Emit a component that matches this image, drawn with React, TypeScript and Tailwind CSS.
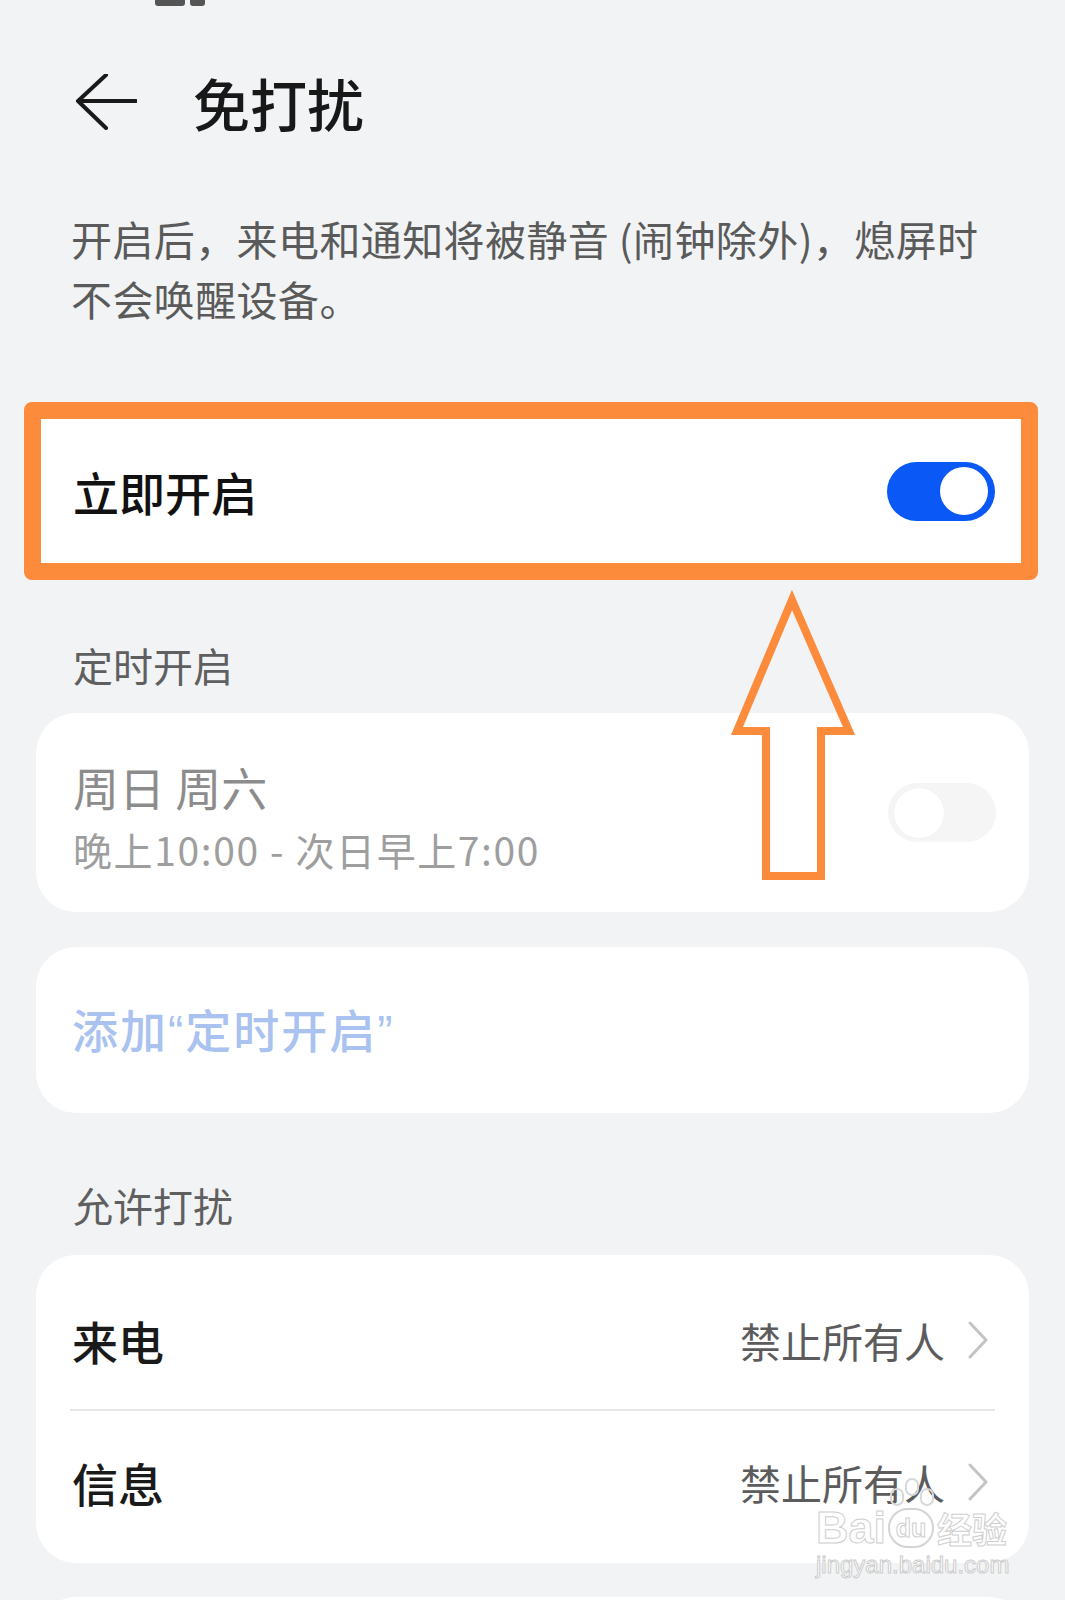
import React from 'react';

const font = "font-['Noto_Sans_CJK_SC','Noto_Sans',sans-serif]";

const Toggle: React.FC<{ on: boolean }> = ({ on }) =>
  on ? (
    <div className="w-[108px] h-[59px] rounded-full bg-[#0A59F7] flex items-center justify-end pr-[7px]">
      <div className="w-[48px] h-[48px] rounded-full bg-white" />
    </div>
  ) : (
    <div className="w-[108px] h-[59px] rounded-full bg-[#f5f5f5] flex items-center justify-start pl-[6px]">
      <div className="w-[50px] h-[50px] rounded-full bg-white shadow-[0_0_2px_rgba(0,0,0,0.04)]" />
    </div>
  );

const Chevron = () => (
  <svg width="22" height="38" viewBox="0 0 22 38" fill="none">
    <path d="M3 2 L19 19 L3 36" stroke="#c4c4c4" strokeWidth="3" strokeLinecap="round" strokeLinejoin="round" />
  </svg>
);

const AllowRow: React.FC<{ label: string; value: string; className?: string }> = ({ label, value, className }) => (
  <div className={`flex items-center justify-between pl-[36px] pr-[40px] ${className ?? ''}`}>
    <span className="text-[46px] leading-[56px] font-medium text-[#1a1a1a]">{label}</span>
    <div className="flex items-center gap-[22px]">
      <span className="text-[41px] leading-[52px] text-[#5c5c5c]">{value}</span>
      <Chevron />
    </div>
  </div>
);

export default function App() {
  return (
    <div className={`relative w-[1065px] h-[1600px] overflow-hidden bg-[#F1F3F5] ${font}`}>
      {/* clipped status bar icon */}
      <div className="flex h-[8px] pl-[155px] gap-[5px]">
        <div className="w-[30px] h-[6px] rounded-b-[3px] bg-[#555]" />
        <div className="w-[15px] h-[6px] rounded-b-[3px] bg-[#555]" />
      </div>

      {/* header */}
      <div className="flex items-center h-[60px] mt-[64px] pl-[75px]">
        <svg width="62" height="56" viewBox="0 0 62 56" fill="none">
          <path d="M61 27 H3 M31 1 L3 27 L31 54" stroke="#1a1a1a" strokeWidth="4" strokeLinecap="round" strokeLinejoin="round" />
        </svg>
        <h1 className="ml-[56px] text-[57px] leading-[60px] font-medium text-[#181818]">免打扰</h1>
      </div>

      {/* description */}
      <p className="mt-[76px] pl-[71px] text-[41px] leading-[60px] tracking-[0.4px] text-[#5a5a5a]">
        开启后，来电和通知将被静音 (闹钟除外)，熄屏时
        <br />
        不会唤醒设备。
      </p>

      {/* highlighted switch */}
      <div className="mt-[74px] ml-[24px] w-[1014px] h-[178px] border-[17px] border-[#FD8B3C] rounded-[8px] bg-white flex items-center justify-between pl-[32px] pr-[26px]">
        <span className="text-[46px] leading-[56px] font-medium text-[#111]">立即开启</span>
        <Toggle on />
      </div>

      {/* scheduled */}
      <div className="mt-[61px] pl-[73px] text-[40px] leading-[48px] text-[#5f5f5f]">定时开启</div>
      <div className="mt-[24px] mx-[36px] h-[199px] rounded-[40px] bg-white flex items-center justify-between pl-[37px] pr-[33px]">
        <div className="flex flex-col pt-[4px]">
          <span className="text-[46px] leading-[58px] text-[#8c8c8c]">周日 周六</span>
          <span className="mt-[10px] text-[39px] leading-[48px] tracking-[1.6px] text-[#9e9e9e]">晚上10:00 - 次日早上7:00</span>
        </div>
        <Toggle on={false} />
      </div>

      <div className="mt-[35px] mx-[36px] h-[166px] rounded-[40px] bg-white flex items-center pl-[36px]">
        <span className="text-[46px] leading-[56px] tracking-[2px] font-medium text-[#A9C2F0]">
          添加<span className="font-['Liberation_Sans',sans-serif]">“</span>定时开启<span className="font-['Liberation_Sans',sans-serif]">”</span>
        </span>
      </div>

      {/* allow */}
      <div className="mt-[68px] pl-[73px] text-[40px] leading-[48px] text-[#5f5f5f]">允许打扰</div>
      <div className="mt-[26px] mx-[36px] rounded-[40px] bg-white flex flex-col">
        <AllowRow label="来电" value="禁止所有人" className="h-[154px] pt-[16px]" />
        <div className="mx-[34px] h-[2px] bg-[#e6e6e6]" />
        <AllowRow label="信息" value="禁止所有人" className="h-[152px] pb-[10px]" />
      </div>
      <div className="mt-[34px] mx-[36px] h-[80px] rounded-t-[40px] bg-white" />

      {/* annotation arrow */}
      <svg className="absolute left-0 top-0 pointer-events-none" width="1065" height="1600" viewBox="0 0 1065 1600" fill="none">
        <path
          d="M792 600 L849 731 L821 731 L821 876 L766 876 L766 731 L737 731 Z"
          stroke="#FD8B3C"
          strokeWidth="8"
          strokeLinejoin="miter"
        />
      </svg>

      {/* watermark */}
      <div className="absolute left-[816px] top-[1502px] pointer-events-none flex flex-col items-start">
        <div className="relative flex items-end h-[48px]">
          <span className="text-[45px] leading-[45px] font-bold font-['Liberation_Sans',sans-serif] text-white [-webkit-text-stroke:1px_#cfcfcf]">Bai</span>
          <div className="relative ml-[2px] mb-[2px] w-[46px] h-[40px] rounded-full border-[2px] border-[#d4d4d4] bg-white/60 flex items-center justify-center">
            <span className="text-[25px] leading-[25px] font-bold font-['Liberation_Sans',sans-serif] text-white [-webkit-text-stroke:1px_#cfcfcf]">du</span>
            <div className="absolute -top-[22px] left-[0px] w-[14px] h-[18px] rounded-full border-[2px] border-[#d8d8d8]" />
            <div className="absolute -top-[32px] left-[15px] w-[14px] h-[18px] rounded-full border-[2px] border-[#d8d8d8]" />
            <div className="absolute -top-[22px] left-[30px] w-[14px] h-[18px] rounded-full border-[2px] border-[#d8d8d8]" />
          </div>
          <span className="ml-[3px] text-[35px] leading-[44px] font-bold text-white [-webkit-text-stroke:1px_#cfcfcf]">经验</span>
        </div>
        <span className="mt-[3px] text-[24px] leading-[24px] font-['Liberation_Sans',sans-serif] text-white [-webkit-text-stroke:1px_#cdcdcd]">jingyan.baidu.com</span>
      </div>
    </div>
  );
}
